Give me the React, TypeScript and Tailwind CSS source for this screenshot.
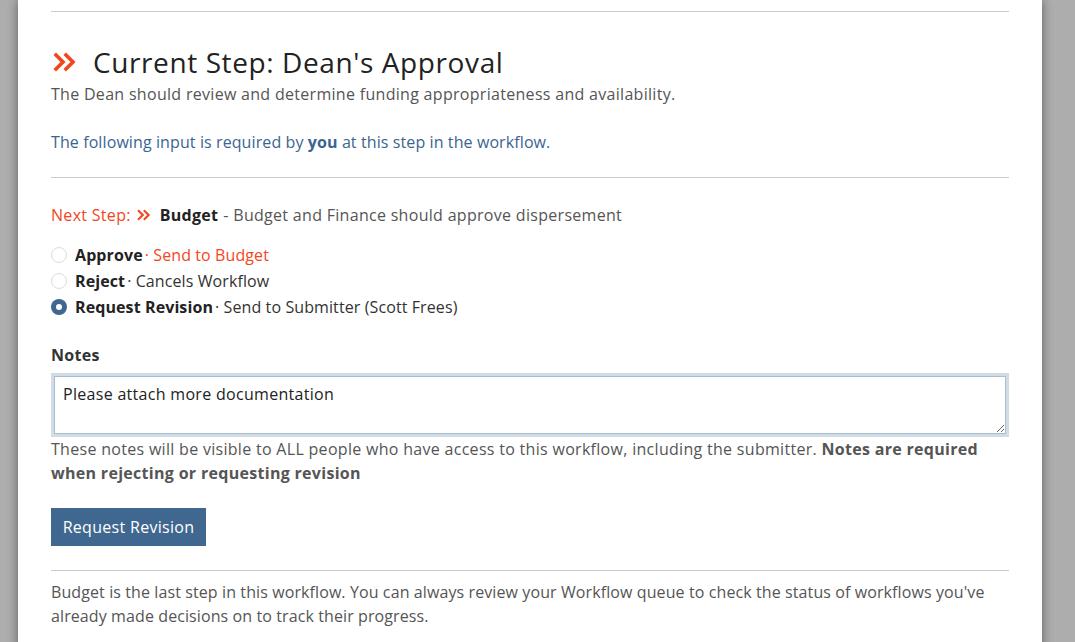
import React from "react";

function Chevrons({ className }: { className?: string }) {
  return (
    <svg viewBox="0 0 24 20" className={className} fill="none" stroke="currentColor" strokeWidth="3.6" strokeLinecap="square">
      <polyline points="3,3 10,10 3,17" />
      <polyline points="13,3 20,10 13,17" />
    </svg>
  );
}

function Radio({ checked }: { checked?: boolean }) {
  if (checked) {
    return (
      <span className="w-4 h-4 rounded-full bg-[#3f6790] flex items-center justify-center shrink-0">
        <span className="w-[6px] h-[6px] rounded-full bg-white" />
      </span>
    );
  }
  return <span className="w-4 h-4 rounded-full border border-[#dcdcdc] bg-white shrink-0" />;
}

const options = [
  { label: "Approve", note: "Send to Budget", accent: true },
  { label: "Reject", note: "Cancels Workflow" },
  { label: "Request Revision", note: "Send to Submitter (Scott Frees)", checked: true },
];

export default function App() {
  return (
    <div className="min-h-screen bg-[#adadad] flex" style={{ fontFamily: '"Open Sans", "Liberation Sans", sans-serif' }}>
      <div className="ml-[18px] w-[1024px] bg-white shadow-[0_0_10px_rgba(0,0,0,0.45)] px-[33px] pt-[11px] pb-6 text-[16px] tracking-[0.3px] text-[#555]">
        <div className="h-px bg-[#cccccc]" />

        {/* current step */}
        <div className="mt-[33px] flex items-center h-[34px]">
          <Chevrons className="w-[24px] h-[20px] text-[#f2461c] ml-[2px]" />
          <h1 className="ml-[16px] text-[28px] leading-[34px] tracking-[0.6px] text-[#222]">Current Step: Dean's Approval</h1>
        </div>
        <p className="mt-[3px] leading-6">The Dean should review and determine funding appropriateness and availability.</p>
        <p className="mt-6 leading-6 text-[#3b6591] tracking-[0.1px]">
          The following input is required by <b>you</b> at this step in the workflow.
        </p>

        <div className="mt-[23px] h-px bg-[#cccccc]" />

        {/* next step */}
        <div className="mt-[25px] leading-6 flex items-center">
          <span className="text-[#f2461c]">Next Step:</span>
          <Chevrons className="w-[14px] h-[12px] text-[#f2461c] ml-[6px]" />
          <b className="ml-[9px] text-[#222]">Budget</b>
          <span className="ml-[5px]">- Budget and Finance should approve dispersement</span>
        </div>

        <div className="mt-[15px] tracking-[0.1px]">
          {options.map((o) => (
            <label key={o.label} className="flex items-center h-[26px]">
              <Radio checked={o.checked} />
              <b className="ml-2 text-[#222]">{o.label}</b>
              <span className={"ml-[2px] " + (o.accent ? "text-[#f2461c]" : "text-[#333]")}>· {o.note}</span>
            </label>
          ))}
        </div>

        {/* notes */}
        <div className="mt-[23px] leading-6 font-bold text-[#333]">Notes</div>
        <div className="mt-[6px] border-[3px] border-[#d0dce6]">
          <textarea
            className="block w-full h-[58px] border border-[#a9bdcc] px-2 pt-[5px] leading-6 text-[#222] tracking-[0.3px] outline-none"
            defaultValue="Please attach more documentation"
          />
        </div>
        <p className="leading-6">
          These notes will be visible to ALL people who have access to this workflow, including the submitter.{" "}
          <b>Notes are required when rejecting or requesting revision</b>
        </p>

        <button className="mt-[23px] h-[38px] w-[155px] bg-[#3f6790] text-white tracking-[0.3px]">Request Revision</button>

        <div className="mt-6 h-px bg-[#cccccc]" />
        <p className="mt-[9px] leading-6 tracking-[0.1px]">
          Budget is the last step in this workflow. You can always review your Workflow queue to check the status of
          workflows you've already made decisions on to track their progress.
        </p>
      </div>
    </div>
  );
}
